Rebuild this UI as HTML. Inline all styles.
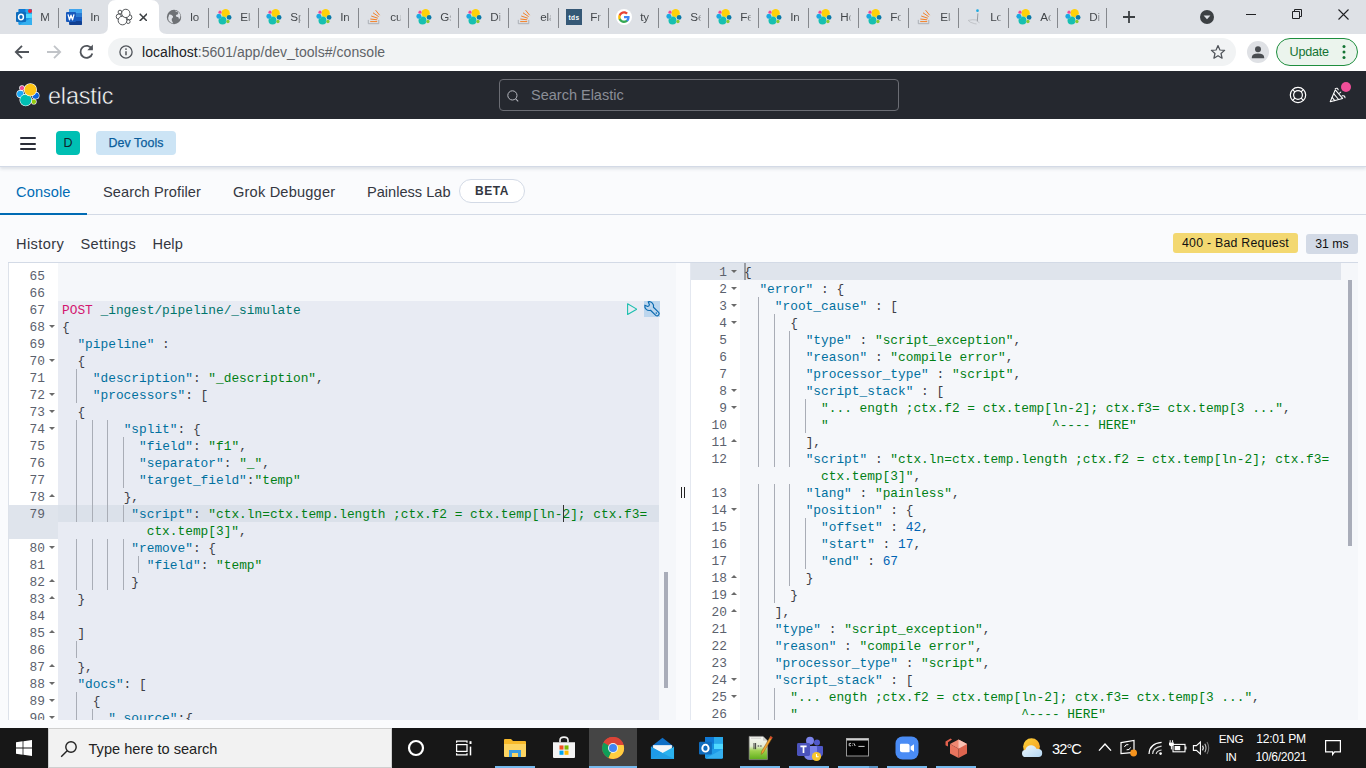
<!DOCTYPE html>
<html><head><meta charset="utf-8"><title>Console - Dev Tools - Elastic</title>
<style>
*{box-sizing:border-box;margin:0;padding:0}
html,body{width:1366px;height:768px;overflow:hidden;background:#fafbfd;font-family:"Liberation Sans",sans-serif;}
body{position:relative}
.abs{position:absolute}
/* ---------- chrome ---------- */
#tabbar{position:absolute;left:0;top:0;width:1366px;height:34px;background:#dee1e6}
#toolbar{position:absolute;left:0;top:34px;width:1366px;height:37px;background:#fff}
.tab{position:absolute;top:0;height:34px;width:50px}
.tab .fav{position:absolute;left:8px;top:9px;width:16px;height:16px}
.tab .tt{position:absolute;left:32px;top:9px;width:11px;height:16px;overflow:hidden;font-size:11.7px;line-height:16px;letter-spacing:-0.2px;color:#42464a;white-space:nowrap;
  -webkit-mask-image:linear-gradient(90deg,#000 0,#000 65%,rgba(0,0,0,.3) 100%);mask-image:linear-gradient(90deg,#000 0,#000 65%,rgba(0,0,0,.3) 100%)}
.tsep{position:absolute;top:7.5px;width:1px;height:20px;background:#85888d}
#atab{position:absolute;left:100px;top:0;width:68px;height:34px}
#url{position:absolute;left:108px;top:4px;width:1128px;height:28px;border-radius:14px;background:#f1f3f4}
#urltxt{position:absolute;left:34px;top:5px;font-size:14px;line-height:18px;color:#5f6368;white-space:nowrap;letter-spacing:0.05px}
#urltxt b{font-weight:400;color:#202124}
/* ---------- kibana header ---------- */
#khead{position:absolute;left:0;top:71px;width:1366px;height:48px;background:#25282f}
#elastic{position:absolute;left:48px;top:10.7px;font-size:23.4px;line-height:28px;color:#fff;letter-spacing:-0.15px;-webkit-text-stroke:0.5px #25282f}
#ksearch{position:absolute;left:499px;top:8px;width:400px;height:32px;border:1px solid #6b6d74;border-radius:4px;background:#25282f}
#ksearch span{position:absolute;left:31px;top:6px;font-size:14.5px;line-height:18px;color:#8b8e97}
#knav{position:absolute;left:0;top:119px;width:1366px;height:48px;background:#fff;border-bottom:1px solid #d3dae6;box-shadow:0 2px 3px rgba(120,130,150,.22)}
#ham i{position:absolute;left:20px;width:16px;height:2px;background:#2b2e38;border-radius:1px}
#avD{position:absolute;left:56px;top:12px;width:24px;height:24px;border-radius:4px;background:#00bfb3;color:#10222a;font-size:12.5px;line-height:24px;text-align:center}
#crumb{-webkit-text-stroke:0.25px #0a5d9c;position:absolute;left:96px;top:12px;width:80px;height:24px;border-radius:4px;background:#cce4f5;color:#0a5d9c;font-size:12.4px;line-height:24px;text-align:center;letter-spacing:0.1px}
/* ---------- dev tools tabs ---------- */
#dtabs{position:absolute;left:0;top:168px;width:1366px;height:47px;border-bottom:1px solid #d3dae6}
#dtabs span{position:absolute;top:15px;font-size:14.6px;line-height:18px;color:#343741;white-space:nowrap}
#dtabs .on{color:#006bb4}
#dtabs .ul{position:absolute;left:0;top:45px;width:87px;height:2px;background:#006bb4}
#beta{position:absolute;left:459px;top:11px;width:66px;height:24px;border:1px solid #d3dae6;border-radius:13px;background:#fff;color:#343741;font-size:12px;line-height:22px;font-weight:700;text-align:center;letter-spacing:0.6px}
#hbar span{position:absolute;top:235px;font-size:14.6px;line-height:18px;color:#343741}
.bdg{position:absolute;height:20px;border-radius:3px;font-size:12.3px;line-height:20px;text-align:center;color:#111;white-space:nowrap}
/* ---------- editor ---------- */
#ed{position:absolute;left:8px;top:262px;width:1350px;height:458px;overflow:hidden;font-family:"Liberation Mono",monospace;font-size:12.833px;line-height:17px}
#edtop{position:absolute;left:0;top:0;width:1350px;height:1px;background:#d3dae6;z-index:5}
#lp{position:absolute;left:0;top:1px;width:668px;height:458px;overflow:hidden;border-left:1px solid #dde2ea;background:#f5f7fa}
#rp{position:absolute;left:682px;top:1px;width:668px;height:458px;overflow:hidden;border-left:1px solid #e4e8f0;background:#f5f7fa}
#rsz{position:absolute;left:668px;top:1px;width:14px;height:458px;background:#fafbfd}
#rsz i{position:absolute;top:224px;width:1px;height:11px;background:#222}
#rsz i:first-child{left:5px} #rsz i:last-child{left:8px}
.gut{position:absolute;left:0;top:0;width:49px;height:458px;background:#fff;color:#5b616d}
.gc{position:absolute;left:0;width:49px}
.ga{background:#dfe4ec}
.gn{position:absolute;right:13px;top:1px;white-space:pre}
.fd,.fu{position:absolute;left:40px;width:0;height:0;border-left:3px solid transparent;border-right:3px solid transparent}
.fd{top:7px;border-top:3.5px solid #6a6a6a}
.fu{top:6px;border-bottom:3.5px solid #6a6a6a}
.cont{position:absolute;left:49px;top:0;width:619px;height:458px}
#lp .cont{width:602px}
.ln{position:absolute;left:4px;white-space:pre;height:17px;padding-top:1px;color:#3d4047}
.ig{display:inline-block;height:17px;margin-top:-1px;vertical-align:top;box-shadow:inset -1px 0 0 #a9adb6}
.blk{position:absolute;left:0;top:38px;width:601px;height:420px;background:#e8ebf3}
.al{position:absolute;left:0;width:601px;height:17px;background:#dbe1ea}
#rp .al{width:601px;background:#dfe4ec}
.cur{position:absolute;width:1px;height:17px;background:#333}
.rcur{position:absolute;left:4px;top:0;width:2px;height:17px;background:#9a9da3}
.sb{position:absolute;width:4.4px;background:#a9adb9}
#play{position:absolute;left:568.85px;top:39.85px;width:10.4px;height:12.3px}
#wr{position:absolute;left:586px;top:38px;width:16px;height:16px;background:#bcd6ee}
.m{color:#d3156f}.u{color:#00756c}.v{color:#00709f}.s{color:#007f14}.n{color:#0064b4}.p{color:#3d4047}
/* ---------- taskbar ---------- */
#tb{position:absolute;left:0;top:728px;width:1366px;height:40px;background:#171717}
#tbs{position:absolute;left:48px;top:0;width:344px;height:40px;background:#f2f2f2;border:1px solid #cfcfcf}
#tbs span{position:absolute;left:39.5px;top:10px;font-size:14.6px;line-height:20px;color:#222}
.tbu{position:absolute;top:38px;height:2px;background:#76b9ed}
.tbt{position:absolute;color:#fff;font-size:11.8px;line-height:14px;white-space:nowrap;text-align:center;letter-spacing:-0.3px}

</style></head>
<body>

<svg width="0" height="0" style="position:absolute">
 <defs>
  <g id="i-el" stroke="#eef0f3" stroke-width="0.3" paint-order="stroke">
   <circle cx="9.6" cy="4.3" r="4.2" fill="#fed10a"/>
   <circle cx="6.5" cy="11.5" r="4.0" fill="#17bfb0"/>
   <circle cx="2.9" cy="7.3" r="2.5" fill="#1ba9e1"/>
   <circle cx="4.0" cy="3.2" r="1.6" fill="#f04e98"/>
   <circle cx="13.1" cy="8.4" r="2.4" fill="#0b7aa8"/>
   <circle cx="11.9" cy="12.5" r="1.7" fill="#8bc831"/>
  </g>
  <g id="i-so">
   <path d="M2.3 10.9 V14.7 H12.8 V10.9" fill="none" stroke="#a9adb4" stroke-width="0.95"/>
   <g stroke="#f48024" stroke-width="1" fill="none">
    <path d="M4.2 12.6 H11.2"/>
    <path d="M4.3 10.0 L11.2 10.8"/>
    <path d="M5.2 7.0 L11.8 9.2"/>
    <path d="M7.0 3.8 L12.6 7.6"/>
    <path d="M9.6 1.2 L13.6 6.2"/>
   </g>
  </g>
 </defs>
</svg>
<div id="tabbar"><div class="tab" style="left:8.3px"><svg class="fav" viewBox="0 0 16 16"><rect x="2.6" y="0" width="13.4" height="16" rx="1" fill="#1490df"/>
<rect x="9.3" y="0" width="6.7" height="5" fill="#28a8ea"/><rect x="2.6" y="0" width="6.7" height="5" fill="#0f78d4"/><rect x="9.3" y="5" width="6.7" height="4.5" fill="#50d9ff"/>
<path d="M2.6 9 L16 9 L16 15 Q16 16 15 16 L3.6 16 Q2.6 16 2.6 15 Z" fill="#1e9be8"/><path d="M3 16 L16 8.6 V15 Q16 16 15 16 Z" fill="#35b0f0"/>
<rect x="0" y="3" width="10" height="10" rx="1" fill="#0f6cbd"/>
<ellipse cx="5" cy="8" rx="2.4" ry="2.7" fill="none" stroke="#fff" stroke-width="1.5"/>
<circle cx="14" cy="2.1" r="2" fill="#e8283c"/></svg><span class="tt">M</span></div><div class="tab" style="left:58.3px"><svg class="fav" viewBox="0 0 16 16"><rect x="3.2" y="0" width="12.8" height="16" rx="1" fill="#2b7cd3"/>
<rect x="3.2" y="0" width="12.8" height="4" fill="#41a5ee"/><rect x="3.2" y="8" width="12.8" height="4" fill="#185abd"/><rect x="3.2" y="12" width="12.8" height="4" rx="1" fill="#103f91"/>
<rect x="0" y="3" width="10" height="10" rx="1" fill="#185abd"/>
<path d="M2 5.4 L3.5 10.8 L5 6.2 L6.5 10.8 L8 5.4" fill="none" stroke="#fff" stroke-width="1.3" stroke-linejoin="round"/></svg><span class="tt">In</span></div><div class="tab" style="left:158.3px"><svg class="fav" viewBox="0 0 16 16"><circle cx="8" cy="8" r="7.2" fill="#6e7175"/>
<path d="M3.2 5.4 Q5.5 5.2 6.2 6.6 Q7.6 7.2 6.8 8.8 Q5.2 9.6 5.8 11.6 Q6.4 13.2 7.4 14.4 Q4.2 14 2.6 11.6 Q1.6 8.6 3.2 5.4Z M8.8 1.6 Q9.8 3.4 11.6 3 Q13 4.4 11.6 5.4 Q10.2 5.4 9.8 6.8 Q10.4 8.2 12 8 Q13.2 8.8 12.8 10.6 Q14.6 9 14.4 6.4 Q13.4 2.6 8.8 1.6Z" fill="#dee1e6"/></svg><span class="tt">lo</span></div><div class="tab" style="left:208.3px"><svg class="fav" viewBox="0 0 16 16"><use href="#i-el"/></svg><span class="tt">Ela</span></div><div class="tab" style="left:258.3px"><svg class="fav" viewBox="0 0 16 16"><use href="#i-el"/></svg><span class="tt">Sp</span></div><div class="tab" style="left:308.3px"><svg class="fav" viewBox="0 0 16 16"><use href="#i-el"/></svg><span class="tt">In</span></div><div class="tab" style="left:358.3px"><svg class="fav" viewBox="0 0 16 16"><use href="#i-so"/></svg><span class="tt">cu</span></div><div class="tab" style="left:408.3px"><svg class="fav" viewBox="0 0 16 16"><use href="#i-el"/></svg><span class="tt">Gs</span></div><div class="tab" style="left:458.3px"><svg class="fav" viewBox="0 0 16 16"><use href="#i-el"/></svg><span class="tt">Di</span></div><div class="tab" style="left:508.3px"><svg class="fav" viewBox="0 0 16 16"><use href="#i-so"/></svg><span class="tt">ela</span></div><div class="tab" style="left:558.3px"><svg class="fav" viewBox="0 0 16 16"><rect x="0" y="0" width="16" height="16" fill="#355876"/><text x="8" y="10.6" font-family="Liberation Sans" font-weight="700" font-size="6.6" letter-spacing="0.3" fill="#fff" text-anchor="middle">tds</text></svg><span class="tt">Fr</span></div><div class="tab" style="left:608.3px"><svg class="fav" viewBox="0 0 16 16"><circle cx="8" cy="8" r="8" fill="#fff"/>
<path d="M13.6 8.15 c0-.42-.04-.82-.1-1.2 H8 v2.3 h3.15 c-.14.73-.55 1.35-1.17 1.77 v1.47 h1.9 C13 11.47 13.6 9.95 13.6 8.15z" fill="#4285f4"/>
<path d="M8 13.9 c1.58 0 2.9-.52 3.87-1.42 l-1.9-1.47 c-.52.35-1.2.56-1.97.56 -1.52 0-2.8-1.03-3.26-2.4 H2.8 v1.52 C3.76 12.6 5.72 13.9 8 13.9z" fill="#34a853"/>
<path d="M4.74 9.17 c-.12-.35-.18-.73-.18-1.12 s.07-.77.18-1.12 V5.4 H2.8 C2.4 6.2 2.17 7.1 2.17 8.05 s.23 1.85.63 2.64 l1.94-1.52z" fill="#fbbc05"/>
<path d="M8 4.52 c.86 0 1.63.3 2.24.87 l1.68-1.68 C10.9 2.77 9.58 2.2 8 2.2 5.72 2.2 3.76 3.5 2.8 5.4 l1.94 1.52 C5.2 5.55 6.48 4.52 8 4.52z" fill="#ea4335"/></svg><span class="tt">ty</span></div><div class="tab" style="left:658.3px"><svg class="fav" viewBox="0 0 16 16"><use href="#i-el"/></svg><span class="tt">Se</span></div><div class="tab" style="left:708.3px"><svg class="fav" viewBox="0 0 16 16"><use href="#i-el"/></svg><span class="tt">Fe</span></div><div class="tab" style="left:758.3px"><svg class="fav" viewBox="0 0 16 16"><use href="#i-el"/></svg><span class="tt">In</span></div><div class="tab" style="left:808.3px"><svg class="fav" viewBox="0 0 16 16"><use href="#i-el"/></svg><span class="tt">Ho</span></div><div class="tab" style="left:858.3px"><svg class="fav" viewBox="0 0 16 16"><use href="#i-el"/></svg><span class="tt">Fo</span></div><div class="tab" style="left:908.3px"><svg class="fav" viewBox="0 0 16 16"><use href="#i-so"/></svg><span class="tt">Ela</span></div><div class="tab" style="left:958.3px"><svg class="fav" viewBox="0 0 16 16"><circle cx="11.5" cy="1.7" r="1.35" fill="#1ba9e1"/><path d="M11.9 4.4 L11.3 12.4" stroke="#8f9398" stroke-width="0.9" fill="none"/><path d="M2.2 11.4 Q6 10.3 11.2 11 M2.2 11.4 Q3 13.3 8.4 14.6 L10.6 15 M11.3 12.4 L13.5 13.8" stroke="#b4b7bc" stroke-width="0.7" fill="none"/></svg><span class="tt">Lo</span></div><div class="tab" style="left:1008.3px"><svg class="fav" viewBox="0 0 16 16"><use href="#i-el"/></svg><span class="tt">Ac</span></div><div class="tab" style="left:1057.3px"><svg class="fav" viewBox="0 0 16 16"><use href="#i-el"/></svg><span class="tt">Di</span></div><i class="tsep" style="left:58px"></i><i class="tsep" style="left:208px"></i><i class="tsep" style="left:258px"></i><i class="tsep" style="left:308px"></i><i class="tsep" style="left:358px"></i><i class="tsep" style="left:408px"></i><i class="tsep" style="left:458px"></i><i class="tsep" style="left:508px"></i><i class="tsep" style="left:558px"></i><i class="tsep" style="left:608px"></i><i class="tsep" style="left:658px"></i><i class="tsep" style="left:708px"></i><i class="tsep" style="left:758px"></i><i class="tsep" style="left:808px"></i><i class="tsep" style="left:858px"></i><i class="tsep" style="left:908px"></i><i class="tsep" style="left:958px"></i><i class="tsep" style="left:1008px"></i><i class="tsep" style="left:1057px"></i><i class="tsep" style="left:1106px"></i><div id="atab"><svg width="68" height="34" viewBox="0 0 68 34" style="position:absolute;left:0;top:0"><path d="M0 34 Q8 34 8 26 V8 Q8 0 16 0 H51 Q59 0 59 8 V26 Q59 34 67 34 Z" fill="#fff"/></svg>
<div style="position:absolute;left:8px;top:0;width:50px;height:34px" class="tab"><svg class="fav" viewBox="0 0 16 16" fill="#fff" stroke="#3f4346" stroke-width="0.9" style="overflow:visible">
   <circle cx="4.0" cy="3.1" r="1.9"/>
   <circle cx="2.8" cy="7.6" r="2.6"/>
   <circle cx="13.3" cy="8.3" r="2.6"/>
   <circle cx="12.2" cy="12.6" r="1.9"/>
   <circle cx="6.5" cy="11.5" r="4.35"/>
   <circle cx="9.8" cy="4.4" r="4.15"/></svg></div>
<svg style="position:absolute;left:38.7px;top:12.6px" width="8.8" height="8.8" viewBox="0 0 8.8 8.8"><path d="M0.7 0.7 L8.1 8.1 M8.1 0.7 L0.7 8.1" stroke="#3c4043" stroke-width="1.55" fill="none"/></svg>
</div><svg style="position:absolute;left:1122.8px;top:11px" width="12" height="12" viewBox="0 0 12 12"><path d="M6 0 V12 M0 6 H12" stroke="#3c4043" stroke-width="1.8"/></svg><svg style="position:absolute;left:1199px;top:9px" width="16" height="16" viewBox="0 0 16 16"><circle cx="8" cy="8" r="7" fill="#3c4043"/><path d="M4.6 6.4 H11.4 L8 10.2Z" fill="#dee1e6"/></svg><svg style="position:absolute;left:1245px;top:8px" width="12" height="12" viewBox="0 0 12 12"><path d="M1 6.5 H11" stroke="#202124" stroke-width="1"/></svg><svg style="position:absolute;left:1291px;top:8px" width="12" height="12" viewBox="0 0 12 12"><path d="M1.5 3.5 H8.5 V10.5 H1.5 Z M3.5 3.5 V1.5 H10.5 V8.5 H8.5" fill="none" stroke="#202124" stroke-width="1"/></svg><svg style="position:absolute;left:1337.5px;top:8.5px" width="11" height="11" viewBox="0 0 11 11"><path d="M0.5 0.5 L10.5 10.5 M10.5 0.5 L0.5 10.5" stroke="#202124" stroke-width="1.1"/></svg></div><div id="toolbar">
<svg style="position:absolute;left:14px;top:10px" width="16" height="16" viewBox="0 0 16 16"><path d="M15 8 H2.4 M8 1.8 L1.8 8 L8 14.2" fill="none" stroke="#50545a" stroke-width="1.8"/></svg>
<svg style="position:absolute;left:46px;top:10px" width="16" height="16" viewBox="0 0 16 16"><path d="M1 8 H13.6 M8 1.8 L14.2 8 L8 14.2" fill="none" stroke="#c1c4c8" stroke-width="1.8"/></svg>
<svg style="position:absolute;left:78px;top:9px" width="17" height="17" viewBox="0 0 17 17"><path d="M13.9 6.2 A6 6 0 1 0 14.3 10.4" fill="none" stroke="#50545a" stroke-width="1.8"/><path d="M14.9 1.6 V7.2 H9.3 Z" fill="#50545a"/></svg>
<div id="url">
 <svg style="position:absolute;left:11px;top:7px" width="14" height="14" viewBox="0 0 14 14"><circle cx="7" cy="7" r="6.1" fill="none" stroke="#50545a" stroke-width="1.3"/><path d="M7 6.2 V10.3" stroke="#50545a" stroke-width="1.5"/><circle cx="7" cy="4.1" r="0.9" fill="#50545a"/></svg>
 <div id="urltxt"><b>localhost</b>:5601/app/dev_tools#/console</div>
 <svg style="position:absolute;left:1102px;top:6px" width="16" height="16" viewBox="0 0 16 16"><path d="M8 1.6 L9.9 6 L14.6 6.4 L11 9.5 L12.1 14.2 L8 11.7 L3.9 14.2 L5 9.5 L1.4 6.4 L6.1 6 Z" fill="none" stroke="#50545a" stroke-width="1.25" stroke-linejoin="round"/></svg>
</div>
<svg style="position:absolute;left:1247px;top:7px" width="22" height="22" viewBox="0 0 22 22"><circle cx="11" cy="11" r="11" fill="#dfe1e5"/><circle cx="11" cy="8.2" r="3" fill="#4a4d51"/><path d="M4.8 16.6 Q4.8 12.6 11 12.6 Q17.2 12.6 17.2 16.6 V17.2 H4.8 Z" fill="#4a4d51"/></svg>
<div style="position:absolute;left:1276px;top:4px;width:82px;height:28px;border:1.3px solid #1e8e3e;border-radius:14px;background:#ebf4ed"></div>
<div style="position:absolute;left:1289.5px;top:10px;font-size:12.6px;line-height:16px;letter-spacing:-0.2px;color:#137333">Update</div>
<svg style="position:absolute;left:1342px;top:10px" width="4" height="16" viewBox="0 0 4 16"><circle cx="2" cy="2.6" r="1.5" fill="#137333"/><circle cx="2" cy="8" r="1.5" fill="#137333"/><circle cx="2" cy="13.4" r="1.5" fill="#137333"/></svg>
</div>
<div id="khead">
 <svg style="position:absolute;left:16px;top:12px;overflow:visible" width="24" height="24" viewBox="0 0 16 16"><g stroke="#fff" stroke-width="0.85" paint-order="stroke">
   <circle cx="4.0" cy="3.4" r="1.45" fill="#f04e98"/>
   <circle cx="2.9" cy="7.3" r="2.2" fill="#1ba9f5"/>
   <circle cx="13.1" cy="8.4" r="2.15" fill="#0b64dd"/>
   <circle cx="11.9" cy="12.5" r="1.45" fill="#93c90e"/>
   <circle cx="6.5" cy="11.4" r="3.75" fill="#00bfb3"/>
   <circle cx="9.6" cy="4.5" r="3.95" fill="#fec514"/></g></svg>
 <div id="elastic">elastic</div>
 <div id="ksearch">
  <svg style="position:absolute;left:6px;top:8.5px" width="14" height="14" viewBox="0 0 14 14"><circle cx="6.4" cy="6.4" r="4.6" fill="none" stroke="#b7b9c0" stroke-width="1"/><path d="M9.7 9.8 L12.2 12.4" stroke="#b7b9c0" stroke-width="1.1"/></svg>
  <span>Search Elastic</span>
 </div>
 <svg style="position:absolute;left:1289px;top:15px" width="18" height="18" viewBox="0 0 18 18" fill="none" stroke="#fff" stroke-width="1.2"><circle cx="9" cy="9" r="7.7"/><circle cx="9" cy="9" r="4.4"/><path d="M3.6 3.6 L5.9 5.9 M14.4 3.6 L12.1 5.9 M3.6 14.4 L5.9 12.1 M14.4 14.4 L12.1 12.1"/></svg>
 <svg style="position:absolute;left:1329px;top:17px;overflow:visible" width="16" height="16" viewBox="0 0 16 16" fill="none" stroke="#fff" stroke-width="1.05" stroke-linejoin="round" stroke-linecap="round"><path d="M1.2 13.7 L6.3 1.8 L13.6 10.4 Z"/><path d="M4.7 5.7 L9.6 11.5 M3.1 9.3 L5.8 12.6"/><path d="M6.2 0.6 Q8.6 -0.6 9.2 1.8"/><path d="M13.2 7.8 Q15.8 7.2 16 9.8"/><path d="M10.6 5.2 L11.8 4"/></svg>
 <div style="position:absolute;left:1340.8px;top:10.6px;width:10.6px;height:10.6px;border-radius:50%;background:#f04e98"></div>
</div>
<div id="knav">
 <div id="ham"><i style="top:18px"></i><i style="top:23.5px"></i><i style="top:29px"></i></div>
 <div id="avD">D</div>
 <div id="crumb">Dev Tools</div>
</div>
<div id="dtabs">
 <span class="on" style="left:16px;letter-spacing:.14px">Console</span>
 <span style="left:103px;letter-spacing:.1px">Search Profiler</span>
 <span style="left:233px;letter-spacing:.19px">Grok Debugger</span>
 <span style="left:367px">Painless Lab</span>
 <div id="beta">BETA</div>
 <div class="ul"></div>
</div>
<div id="hbar">
 <span style="left:16px;letter-spacing:.4px">History</span>
 <span style="left:80.5px;letter-spacing:.37px">Settings</span>
 <span style="left:152.5px;letter-spacing:.1px">Help</span>
</div>
<div class="bdg" style="left:1173px;top:233px;width:125px;letter-spacing:.27px;background:#f3d871">400 - Bad Request</div>
<div class="bdg" style="left:1306px;top:234px;width:52px;background:#d3dae6">31 ms</div>


<div id="ed">
 <div id="edtop"></div>
 <div id="lp">
  <div class="gut"><div class="gc" style="top:4px;height:17px"><span class="gn">65</span></div><div class="gc" style="top:21px;height:17px"><span class="gn">66</span></div><div class="gc" style="top:38px;height:17px"><span class="gn">67</span></div><div class="gc" style="top:55px;height:17px"><span class="gn">68</span><i class="fd"></i></div><div class="gc" style="top:72px;height:17px"><span class="gn">69</span></div><div class="gc" style="top:89px;height:17px"><span class="gn">70</span><i class="fd"></i></div><div class="gc" style="top:106px;height:17px"><span class="gn">71</span></div><div class="gc" style="top:123px;height:17px"><span class="gn">72</span><i class="fd"></i></div><div class="gc" style="top:140px;height:17px"><span class="gn">73</span><i class="fd"></i></div><div class="gc" style="top:157px;height:17px"><span class="gn">74</span><i class="fd"></i></div><div class="gc" style="top:174px;height:17px"><span class="gn">75</span></div><div class="gc" style="top:191px;height:17px"><span class="gn">76</span></div><div class="gc" style="top:208px;height:17px"><span class="gn">77</span></div><div class="gc" style="top:225px;height:17px"><span class="gn">78</span><i class="fu"></i></div><div class="gc ga" style="top:242px;height:34px"><span class="gn">79</span></div><div class="gc" style="top:276px;height:17px"><span class="gn">80</span><i class="fd"></i></div><div class="gc" style="top:293px;height:17px"><span class="gn">81</span></div><div class="gc" style="top:310px;height:17px"><span class="gn">82</span><i class="fu"></i></div><div class="gc" style="top:327px;height:17px"><span class="gn">83</span><i class="fu"></i></div><div class="gc" style="top:344px;height:17px"><span class="gn">84</span></div><div class="gc" style="top:361px;height:17px"><span class="gn">85</span><i class="fu"></i></div><div class="gc" style="top:378px;height:17px"><span class="gn">86</span></div><div class="gc" style="top:395px;height:17px"><span class="gn">87</span><i class="fu"></i></div><div class="gc" style="top:412px;height:17px"><span class="gn">88</span><i class="fd"></i></div><div class="gc" style="top:429px;height:17px"><span class="gn">89</span><i class="fd"></i></div><div class="gc" style="top:446px;height:17px"><span class="gn">90</span><i class="fd"></i></div></div>
  <div class="cont">
    <div class="blk"></div>
    <div class="al" style="top:242px"></div>
    <div class="ln" style="top:4px"></div><div class="ln" style="top:21px"></div><div class="ln" style="top:38px"><span class="m">POST</span> <span class="u">_ingest/pipeline/_simulate</span></div><div class="ln" style="top:55px"><span class="p">{</span></div><div class="ln" style="top:72px">  <span class="v">"pipeline"</span><span class="p"> :</span></div><div class="ln" style="top:89px">  <span class="p">{</span></div><div class="ln" style="top:106px"><span class="ig">  </span>  <span class="v">"description"</span><span class="p">: </span><span class="s">"_description"</span><span class="p">,</span></div><div class="ln" style="top:123px"><span class="ig">  </span>  <span class="v">"processors"</span><span class="p">: </span><span class="p">[</span></div><div class="ln" style="top:140px">  <span class="p">{</span></div><div class="ln" style="top:157px"><span class="ig">  </span><span class="ig">  </span><span class="ig">  </span>  <span class="v">"split"</span><span class="p">: </span><span class="p">{</span></div><div class="ln" style="top:174px"><span class="ig">  </span><span class="ig">  </span><span class="ig">  </span><span class="ig">  </span>  <span class="v">"field"</span><span class="p">: </span><span class="s">"f1"</span><span class="p">,</span></div><div class="ln" style="top:191px"><span class="ig">  </span><span class="ig">  </span><span class="ig">  </span><span class="ig">  </span>  <span class="v">"separator"</span><span class="p">: </span><span class="s">"_"</span><span class="p">,</span></div><div class="ln" style="top:208px"><span class="ig">  </span><span class="ig">  </span><span class="ig">  </span><span class="ig">  </span>  <span class="v">"target_field"</span><span class="p">:</span><span class="s">"temp"</span><span class="p"></span></div><div class="ln" style="top:225px"><span class="ig">  </span><span class="ig">  </span><span class="ig">  </span>  <span class="p">},</span></div><div class="ln" style="top:242px"><span class="ig">  </span><span class="ig">  </span><span class="ig">  </span><span class="ig">  </span> <span class="v">"script"</span><span class="p">: </span><span class="s">"ctx.ln=ctx.temp.length ;ctx.f2 = ctx.temp[ln-2]; ctx.f3=</span><span class="p"></span></div><div class="ln" style="top:259px">           <span class="s">ctx.temp[3]"</span><span class="p">,</span></div><div class="ln" style="top:276px"><span class="ig">  </span><span class="ig">  </span><span class="ig">  </span><span class="ig">  </span> <span class="v">"remove"</span><span class="p">: </span><span class="p">{</span></div><div class="ln" style="top:293px"><span class="ig">  </span><span class="ig">  </span><span class="ig">  </span><span class="ig">  </span><span class="ig">  </span> <span class="v">"field"</span><span class="p">: </span><span class="s">"temp"</span><span class="p"></span></div><div class="ln" style="top:310px"><span class="ig">  </span><span class="ig">  </span><span class="ig">  </span><span class="ig">  </span> <span class="p">}</span></div><div class="ln" style="top:327px">  <span class="p">}</span></div><div class="ln" style="top:344px"></div><div class="ln" style="top:361px">  <span class="p">]</span></div><div class="ln" style="top:378px"><span class="ig">  </span></div><div class="ln" style="top:395px">  <span class="p">},</span></div><div class="ln" style="top:412px">  <span class="v">"docs"</span><span class="p">: </span><span class="p">[</span></div><div class="ln" style="top:429px"><span class="ig">  </span>  <span class="p">{</span></div><div class="ln" style="top:446px"><span class="ig">  </span><span class="ig">  </span>  <span class="v">"_source"</span><span class="p">:</span><span class="p">{</span></div>
    <div class="cur" style="left:504.5px;top:242px"></div>
    <div id="play"><svg width="10.4" height="12.3" viewBox="0 0 10.4 12.3" style="display:block"><path d="M0.6 0.75 L9.75 6.15 L0.6 11.55 Z" fill="none" stroke="#1cbfae" stroke-width="1.1" stroke-linejoin="round"/></svg></div>
    <div id="wr"><svg width="16" height="16" viewBox="0 0 16 16" style="display:block;overflow:visible"><path d="M4.2 0.8 A4.4 4.4 0 0 1 9.44 6.27 L14.65 11.4 A2.1 2.1 0 0 1 11.75 14.4 L6.54 9.27 A4.4 4.4 0 0 1 0.85 4.2 L3.7 5.5 Q5.3 5.2 5.4 3.7 Z" fill="none" stroke="#0a6ab0" stroke-width="1.15" stroke-linejoin="round"/><circle cx="12.3" cy="12.1" r="0.8" fill="#0a6ab0"/></svg></div>
  </div>
  <div class="sb" style="left:655px;top:309px;height:116px"></div>
 </div>
 <div id="rsz"><i></i><i></i></div>
 <div id="rp">
  <div class="gut"><div class="gc ga" style="top:0px;height:17px"><span class="gn">1</span><i class="fd"></i></div><div class="gc" style="top:17px;height:17px"><span class="gn">2</span><i class="fd"></i></div><div class="gc" style="top:34px;height:17px"><span class="gn">3</span><i class="fd"></i></div><div class="gc" style="top:51px;height:17px"><span class="gn">4</span><i class="fd"></i></div><div class="gc" style="top:68px;height:17px"><span class="gn">5</span></div><div class="gc" style="top:85px;height:17px"><span class="gn">6</span></div><div class="gc" style="top:102px;height:17px"><span class="gn">7</span></div><div class="gc" style="top:119px;height:17px"><span class="gn">8</span><i class="fd"></i></div><div class="gc" style="top:136px;height:17px"><span class="gn">9</span><i class="fd"></i></div><div class="gc" style="top:153px;height:17px"><span class="gn">10</span></div><div class="gc" style="top:170px;height:17px"><span class="gn">11</span><i class="fu"></i></div><div class="gc" style="top:187px;height:17px"><span class="gn">12</span></div><div class="gc" style="top:221px;height:17px"><span class="gn">13</span></div><div class="gc" style="top:238px;height:17px"><span class="gn">14</span><i class="fd"></i></div><div class="gc" style="top:255px;height:17px"><span class="gn">15</span></div><div class="gc" style="top:272px;height:17px"><span class="gn">16</span></div><div class="gc" style="top:289px;height:17px"><span class="gn">17</span></div><div class="gc" style="top:306px;height:17px"><span class="gn">18</span><i class="fu"></i></div><div class="gc" style="top:323px;height:17px"><span class="gn">19</span><i class="fu"></i></div><div class="gc" style="top:340px;height:17px"><span class="gn">20</span><i class="fu"></i></div><div class="gc" style="top:357px;height:17px"><span class="gn">21</span></div><div class="gc" style="top:374px;height:17px"><span class="gn">22</span></div><div class="gc" style="top:391px;height:17px"><span class="gn">23</span></div><div class="gc" style="top:408px;height:17px"><span class="gn">24</span><i class="fd"></i></div><div class="gc" style="top:425px;height:17px"><span class="gn">25</span><i class="fd"></i></div><div class="gc" style="top:442px;height:17px"><span class="gn">26</span></div></div>
  <div class="cont">
    <div class="al" style="top:0"></div>
    <div class="rcur"></div>
    <div class="ln" style="top:0px"><span class="p">{</span></div><div class="ln" style="top:17px">  <span class="v">"error"</span><span class="p"> : </span><span class="p">{</span></div><div class="ln" style="top:34px"><span class="ig">  </span>  <span class="v">"root_cause"</span><span class="p"> : </span><span class="p">[</span></div><div class="ln" style="top:51px"><span class="ig">  </span><span class="ig">  </span>  <span class="p">{</span></div><div class="ln" style="top:68px"><span class="ig">  </span><span class="ig">  </span><span class="ig">  </span>  <span class="v">"type"</span><span class="p"> : </span><span class="s">"script_exception"</span><span class="p">,</span></div><div class="ln" style="top:85px"><span class="ig">  </span><span class="ig">  </span><span class="ig">  </span>  <span class="v">"reason"</span><span class="p"> : </span><span class="s">"compile error"</span><span class="p">,</span></div><div class="ln" style="top:102px"><span class="ig">  </span><span class="ig">  </span><span class="ig">  </span>  <span class="v">"processor_type"</span><span class="p"> : </span><span class="s">"script"</span><span class="p">,</span></div><div class="ln" style="top:119px"><span class="ig">  </span><span class="ig">  </span><span class="ig">  </span>  <span class="v">"script_stack"</span><span class="p"> : </span><span class="p">[</span></div><div class="ln" style="top:136px"><span class="ig">  </span><span class="ig">  </span><span class="ig">  </span><span class="ig">  </span>  <span class="s">"... ength ;ctx.f2 = ctx.temp[ln-2]; ctx.f3= ctx.temp[3 ..."</span><span class="p">,</span></div><div class="ln" style="top:153px"><span class="ig">  </span><span class="ig">  </span><span class="ig">  </span><span class="ig">  </span>  <span class="s">"                             ^---- HERE"</span><span class="p"></span></div><div class="ln" style="top:170px"><span class="ig">  </span><span class="ig">  </span><span class="ig">  </span>  <span class="p">],</span></div><div class="ln" style="top:187px"><span class="ig">  </span><span class="ig">  </span><span class="ig">  </span>  <span class="v">"script"</span><span class="p"> : </span><span class="s">"ctx.ln=ctx.temp.length ;ctx.f2 = ctx.temp[ln-2]; ctx.f3=</span><span class="p"></span></div><div class="ln" style="top:204px">          <span class="s">ctx.temp[3]"</span><span class="p">,</span></div><div class="ln" style="top:221px"><span class="ig">  </span><span class="ig">  </span><span class="ig">  </span>  <span class="v">"lang"</span><span class="p"> : </span><span class="s">"painless"</span><span class="p">,</span></div><div class="ln" style="top:238px"><span class="ig">  </span><span class="ig">  </span><span class="ig">  </span>  <span class="v">"position"</span><span class="p"> : </span><span class="p">{</span></div><div class="ln" style="top:255px"><span class="ig">  </span><span class="ig">  </span><span class="ig">  </span><span class="ig">  </span>  <span class="v">"offset"</span><span class="p"> : </span><span class="n">42</span><span class="p">,</span></div><div class="ln" style="top:272px"><span class="ig">  </span><span class="ig">  </span><span class="ig">  </span><span class="ig">  </span>  <span class="v">"start"</span><span class="p"> : </span><span class="n">17</span><span class="p">,</span></div><div class="ln" style="top:289px"><span class="ig">  </span><span class="ig">  </span><span class="ig">  </span><span class="ig">  </span>  <span class="v">"end"</span><span class="p"> : </span><span class="n">67</span><span class="p"></span></div><div class="ln" style="top:306px"><span class="ig">  </span><span class="ig">  </span><span class="ig">  </span>  <span class="p">}</span></div><div class="ln" style="top:323px"><span class="ig">  </span><span class="ig">  </span>  <span class="p">}</span></div><div class="ln" style="top:340px"><span class="ig">  </span>  <span class="p">],</span></div><div class="ln" style="top:357px"><span class="ig">  </span>  <span class="v">"type"</span><span class="p"> : </span><span class="s">"script_exception"</span><span class="p">,</span></div><div class="ln" style="top:374px"><span class="ig">  </span>  <span class="v">"reason"</span><span class="p"> : </span><span class="s">"compile error"</span><span class="p">,</span></div><div class="ln" style="top:391px"><span class="ig">  </span>  <span class="v">"processor_type"</span><span class="p"> : </span><span class="s">"script"</span><span class="p">,</span></div><div class="ln" style="top:408px"><span class="ig">  </span>  <span class="v">"script_stack"</span><span class="p"> : </span><span class="p">[</span></div><div class="ln" style="top:425px"><span class="ig">  </span><span class="ig">  </span>  <span class="s">"... ength ;ctx.f2 = ctx.temp[ln-2]; ctx.f3= ctx.temp[3 ..."</span><span class="p">,</span></div><div class="ln" style="top:442px"><span class="ig">  </span><span class="ig">  </span>  <span class="s">"                             ^---- HERE"</span><span class="p"></span></div>
  </div>
  <div class="sb" style="left:657px;top:17px;height:266px"></div>
 </div>
</div>

<div id="tb">
 <svg style="position:absolute;left:16px;top:12px" width="16" height="16" viewBox="0 0 16 16" fill="#fff"><path d="M0 2.2 L6.6 1.3 V7.6 H0 Z M7.4 1.2 L16 0 V7.6 H7.4 Z M0 8.4 H6.6 V14.7 L0 13.8 Z M7.4 8.4 H16 V16 L7.4 14.8 Z"/></svg>
 <div id="tbs">
  <svg style="position:absolute;left:11px;top:11px" width="18" height="18" viewBox="0 0 18 18" fill="none" stroke="#222" stroke-width="1.4"><circle cx="11" cy="7" r="5.2"/><path d="M7.2 10.8 L1.2 16.8"/></svg>
  <span>Type here to search</span>
 </div>
 <!-- cortana -->
 <svg style="position:absolute;left:407px;top:11px" width="18" height="18" viewBox="0 0 18 18"><circle cx="9" cy="9" r="7" fill="none" stroke="#fff" stroke-width="2.2"/></svg>
 <!-- task view -->
 <svg style="position:absolute;left:455px;top:11px" width="20" height="18" viewBox="0 0 20 18" fill="none" stroke="#fff" stroke-width="1.25"><rect x="1.6" y="5.6" width="10.4" height="6.8"/><path d="M1.6 3.8 V2.1 H12 V3.8 M1.6 14.2 V15.9 H12 V14.2"/><path d="M15.5 7.6 V16.4" stroke-width="1.5"/><rect x="14.5" y="2.2" width="2" height="2.8" fill="#fff" stroke="none"/></svg>
 <!-- file explorer -->
 <svg style="position:absolute;left:503px;top:9px" width="24" height="22" viewBox="0 0 24 22"><path d="M1 3 Q1 2 2 2 H8 L10 4 H22 Q23 4 23 5 V19 H1 Z" fill="#f7b92a"/><path d="M1 7 H23 V19 Q23 20 22 20 H2 Q1 20 1 19 Z" fill="#fcd462"/><path d="M6 13 H18 V20 H6 Z" fill="#3a9be0"/><path d="M9 16 H15 V20 H9Z" fill="#fcd462"/></svg>
 <!-- store -->
 <svg style="position:absolute;left:552px;top:7px" width="24" height="25" viewBox="0 0 24 24" preserveAspectRatio="none"><path d="M8 7 V5 Q8 2 12 2 Q16 2 16 5 V7" fill="none" stroke="#f0f0f0" stroke-width="1.6"/><path d="M1 7 H23 V21 Q23 22 22 22 H2 Q1 22 1 21 Z" fill="#f3f3f3"/><rect x="7.5" y="10" width="4" height="4" fill="#f25022"/><rect x="12.5" y="10" width="4" height="4" fill="#7fba00"/><rect x="7.5" y="15" width="4" height="4" fill="#00a4ef"/><rect x="12.5" y="15" width="4" height="4" fill="#ffb900"/></svg>
 <!-- chrome active -->
 <div style="position:absolute;left:589px;top:0;width:48px;height:40px;background:#454545"></div>
 <svg style="position:absolute;left:601px;top:8px" width="24" height="24" viewBox="0 0 24 24"><circle cx="12" cy="12" r="11" fill="#db4437"/><path d="M12 12 L2.5 6.5 A11 11 0 0 0 7.5 22 Z" fill="#0f9d58"/><path d="M12 12 L7.5 22 A11 11 0 0 0 22.6 9 L12 9 Z" fill="#ffcd40"/><path d="M2.5 6.5 A11 11 0 0 1 22.6 9 H12 Z" fill="#db4437"/><circle cx="12" cy="12" r="5" fill="#f1f1f1"/><circle cx="12" cy="12" r="4" fill="#4285f4"/></svg>
 <!-- mail -->
 <svg style="position:absolute;left:649.5px;top:8.5px" width="25" height="23" viewBox="0 0 26 23"><path d="M1 9.6 L13 0.4 L25 9.6 Z" fill="#0f6fc6"/><path d="M3.2 8 H22.8 V17 H3.2Z" fill="#f4f6f8"/><path d="M1 9.6 L13 16.2 L25 9.6 V22.4 H1Z" fill="#2bb2ee"/><path d="M1 9.6 L13 16.2 L1 22.4Z" fill="#1e9be8"/><path d="M13 16.2 L25 22.4 H1Z" fill="#1b8fdd" opacity=".55"/></svg>
 <!-- outlook -->
 <svg style="position:absolute;left:699px;top:9px" width="24" height="21.5" viewBox="0 0 16 16" preserveAspectRatio="none"><rect x="4" y="0" width="12" height="16" rx="1" fill="#1490df"/><rect x="10" y="0" width="6" height="5" fill="#28a8ea"/><rect x="4" y="0" width="6" height="5" fill="#0f78d4"/><rect x="10" y="5" width="6" height="4.5" fill="#50d9ff"/><rect x="4" y="5" width="6" height="4.5" fill="#1490df"/><path d="M4 9 L16 9 L16 15 Q16 16 15 16 L5 16 Q4 16 4 15 Z" fill="#1e9be8"/><path d="M4.4 16 L16 8.8 V15 Q16 16 15 16 Z" fill="#35b0f0"/><rect x="0" y="3.6" width="8.6" height="9.4" rx="0.8" fill="#0f6cbd"/><ellipse cx="4.3" cy="8.3" rx="2.1" ry="2.6" fill="none" stroke="#fff" stroke-width="1.3"/></svg>
 <!-- notepad++ -->
 <svg style="position:absolute;left:748px;top:7px" width="26" height="26" viewBox="0 0 26 26"><defs><linearGradient id="npg" x1="0" y1="0" x2="0" y2="1"><stop offset="0" stop-color="#f6f6f4"/><stop offset=".42" stop-color="#e4ecd6"/><stop offset=".62" stop-color="#9ed24e"/><stop offset="1" stop-color="#5fae1c"/></linearGradient></defs><path d="M1.2 1.4 H15 L19.4 5.8 V24.6 H1.2 Z" fill="url(#npg)" stroke="#9a9a96" stroke-width="0.7"/><path d="M15 1.4 V5.8 H19.4Z" fill="#cfcfcb"/><path d="M3 3.2 H13" stroke="#c4c4c0" stroke-width="0.8"/><path d="M6 8 V14.2 M7.6 8 V14.2" stroke="#2a2a2a" stroke-width="0.9"/><path d="M9.6 11 H11.2 M12.2 11 H13.6" stroke="#2a2a2a" stroke-width="1.2"/><path d="M22.6 1.2 L24.4 2.6 L15.4 17.6 L13.2 19.4 L13.6 16.4 Z" fill="#f0a530" stroke="#8a5a1c" stroke-width="0.5"/><path d="M22.6 1.2 L24.4 2.6 L23.4 4.3 L21.6 2.9Z" fill="#d8412f"/></svg>
 <!-- teams -->
 <svg style="position:absolute;left:796px;top:7px" width="28" height="28" viewBox="0 0 28 28"><circle cx="21" cy="7.5" r="3" fill="#5059c9"/><circle cx="14" cy="5.8" r="4" fill="#7b83eb"/><path d="M18 11 H26 Q27 11 27 12 V18 Q27 22 23 22 Q20 22 19 19Z" fill="#5059c9"/><path d="M8 11 H20 Q21 11 21 12 V19 Q21 25 14.5 25 Q8 25 8 19Z" fill="#7b83eb"/><rect x="1" y="8" width="13" height="13" rx="1.4" fill="#4b53bc"/><path d="M4.4 11.4 H10.6 M7.5 11.4 V18" stroke="#fff" stroke-width="1.7" fill="none"/><circle cx="20.5" cy="21.5" r="4.6" fill="#f7c52e"/><path d="M20.5 19 V21.8 H22.6" stroke="#fff" stroke-width="1.1" fill="none"/></svg>
 <!-- cmd -->
 <svg style="position:absolute;left:846px;top:10px" width="23" height="18.5" viewBox="0 0 23 18.5"><rect x="0.5" y="0.5" width="22" height="17.5" fill="#040404" stroke="#a4a4a4" stroke-width="0.9"/><rect x="0.5" y="0.5" width="22" height="2" fill="#cfcfcf"/><path d="M3.4 5.4 h1.6 M3.2 5.4 v2.4 M3.4 7.8 h1.6 M6.4 5.6 v0.6 M6.4 7.2 v0.6 M7.8 5.2 l1.4 2.8 M12.4 8.4 H18.6" stroke="#e8e8e8" stroke-width="0.9" fill="none"/></svg>
 <!-- zoom -->
 <svg style="position:absolute;left:895px;top:8px" width="24" height="24" viewBox="0 0 24 24"><rect x="0.5" y="0.5" width="23" height="23" rx="7" fill="#4a8cf5"/><path d="M5 8.6 Q5 7.8 5.8 7.8 H12.6 Q14.6 7.8 14.6 9.8 V15.4 Q14.6 16.2 13.8 16.2 H7 Q5 16.2 5 14.2Z" fill="#fff"/><path d="M15.6 10.6 L19 8.2 V15.8 L15.6 13.4Z" fill="#fff"/></svg>
 <!-- red cube -->
 <svg style="position:absolute;left:943px;top:7px" width="28" height="28" viewBox="0 0 28 28"><path d="M15.5 4.5 L24 9 L15.5 13.7 L7 9 Z" fill="#f08872"/><path d="M15.5 4.5 L24 9 L24 13 L15.5 13.7 Z" fill="#f9c1b3"/><path d="M7 9 L15.5 13.7 V23 L7 18.5 Z" fill="#e9745e"/><path d="M24 9 V18.5 L15.5 23 V13.7Z" fill="#dd644e"/><path d="M2.5 6.5 L7.5 3.5 L9 4.5 L5 7.2 V11.5 L2.5 10.2Z" fill="#e2604c"/></svg>
 <!-- underlines -->
 <i class="tbu" style="left:495px;width:40px"></i>
 <i class="tbu" style="left:589px;width:48px"></i>
 <i class="tbu" style="left:740px;width:40px"></i>
 <i class="tbu" style="left:789px;width:40px"></i>
 <i class="tbu" style="left:838px;width:31px"></i>
 <i class="tbu" style="left:869.3px;width:8.7px;background:#5a93c4"></i>
 <i class="tbu" style="left:887px;width:40px"></i>
 <i class="tbu" style="left:936px;width:40px"></i>
 <!-- weather -->
 <svg style="position:absolute;left:1019px;top:9px" width="26" height="22" viewBox="0 0 26 22"><defs><linearGradient id="sun" x1="0" y1="0" x2="1" y2="1"><stop offset="0" stop-color="#fbd23a"/><stop offset="1" stop-color="#f59a23"/></linearGradient><linearGradient id="cld" x1="0" y1="0" x2="1" y2="1"><stop offset="0" stop-color="#eef7fd"/><stop offset="1" stop-color="#b4d6f1"/></linearGradient></defs><circle cx="12.5" cy="9.6" r="8.4" fill="url(#sun)"/><path d="M7 20 Q3 20 3 16.4 Q3 13.2 6.4 12.8 Q7.6 8.2 12.2 8.2 Q16 8.2 17.4 11.8 Q23.2 11.6 23.2 16 Q23.2 20 19.4 20Z" fill="url(#cld)"/></svg>
 <div class="tbt" style="left:1052px;top:12px;font-size:14.6px;line-height:18px;letter-spacing:-0.9px">32°C</div>
 <svg style="position:absolute;left:1098px;top:14px" width="14" height="10" viewBox="0 0 14 10"><path d="M1 8.6 L7 2 L13 8.6" fill="none" stroke="#fff" stroke-width="1.4"/></svg>
 <svg style="position:absolute;left:1119px;top:11px" width="20" height="18" viewBox="0 0 20 18"><path d="M2 3.6 L15 1.4 V13.4 L2 14.6Z" fill="none" stroke="#fff" stroke-width="1.2"/><path d="M5.4 8 Q6.4 5 9.4 5.6 M11.6 8.4 Q10.6 11.4 7.6 10.8" stroke="#fff" stroke-width="1" fill="none"/><circle cx="14.6" cy="14" r="3.4" fill="#f7941d"/></svg>
 <svg style="position:absolute;left:1147px;top:12px" width="18" height="16" viewBox="0 0 18 16" fill="none" stroke="#fff" stroke-width="1.2"><path d="M2 14 Q2.4 3.6 14.6 2.4" /><path d="M5.6 14 Q6 7.4 14.6 6.2" opacity=".8"/><path d="M9.2 14 Q9.6 10.6 14.6 10" opacity=".8"/><circle cx="13.6" cy="13.6" r="1.3" fill="#fff" stroke="none"/></svg>
 <svg style="position:absolute;left:1168px;top:13px;overflow:visible" width="20" height="14" viewBox="0 0 20 14"><rect x="5" y="3.4" width="12" height="7.4" fill="none" stroke="#fff" stroke-width="1.1"/><rect x="6.6" y="5" width="5.6" height="4.2" fill="#fff"/><path d="M17.8 5.6 V8.6" stroke="#fff" stroke-width="1.3"/><path d="M2.2 -0.8 V1.6 M4.6 -0.8 V1.6" stroke="#fff" stroke-width="1"/><path d="M1 1.6 H5.8 V3.6 Q5.8 5.4 3.4 5.4 Q1 5.4 1 3.6Z" fill="#fff"/><path d="M3.4 5 V8.4" stroke="#fff" stroke-width="1"/></svg>
 <svg style="position:absolute;left:1192px;top:12px" width="20" height="16" viewBox="0 0 20 16" fill="none" stroke="#fff" stroke-width="1.1"><path d="M1.4 5.6 H4.4 L8.4 2 V14 L4.4 10.4 H1.4Z"/><path d="M10.6 5.6 Q12 8 10.6 10.4"/><path d="M12.8 3.8 Q15.2 8 12.8 12.2" opacity=".75"/><path d="M15 2 Q18.4 8 15 14" opacity=".4"/></svg>
 <div class="tbt" style="left:1215px;top:4px;width:32px">ENG</div>
 <div class="tbt" style="left:1215px;top:22px;width:32px">IN</div>
 <div class="tbt" style="left:1249px;top:4px;width:64px;font-size:12.1px">12:01 PM</div>
 <div class="tbt" style="left:1249px;top:22px;width:64px;font-size:12.1px">10/6/2021</div>
 <svg style="position:absolute;left:1324px;top:11px" width="18" height="18" viewBox="0 0 18 18"><path d="M1.6 1.6 H16.4 V12.8 H10.6 L8.6 15.4 V12.8 H1.6Z" fill="none" stroke="#fff" stroke-width="1.2"/></svg>
</div>

</body></html>
